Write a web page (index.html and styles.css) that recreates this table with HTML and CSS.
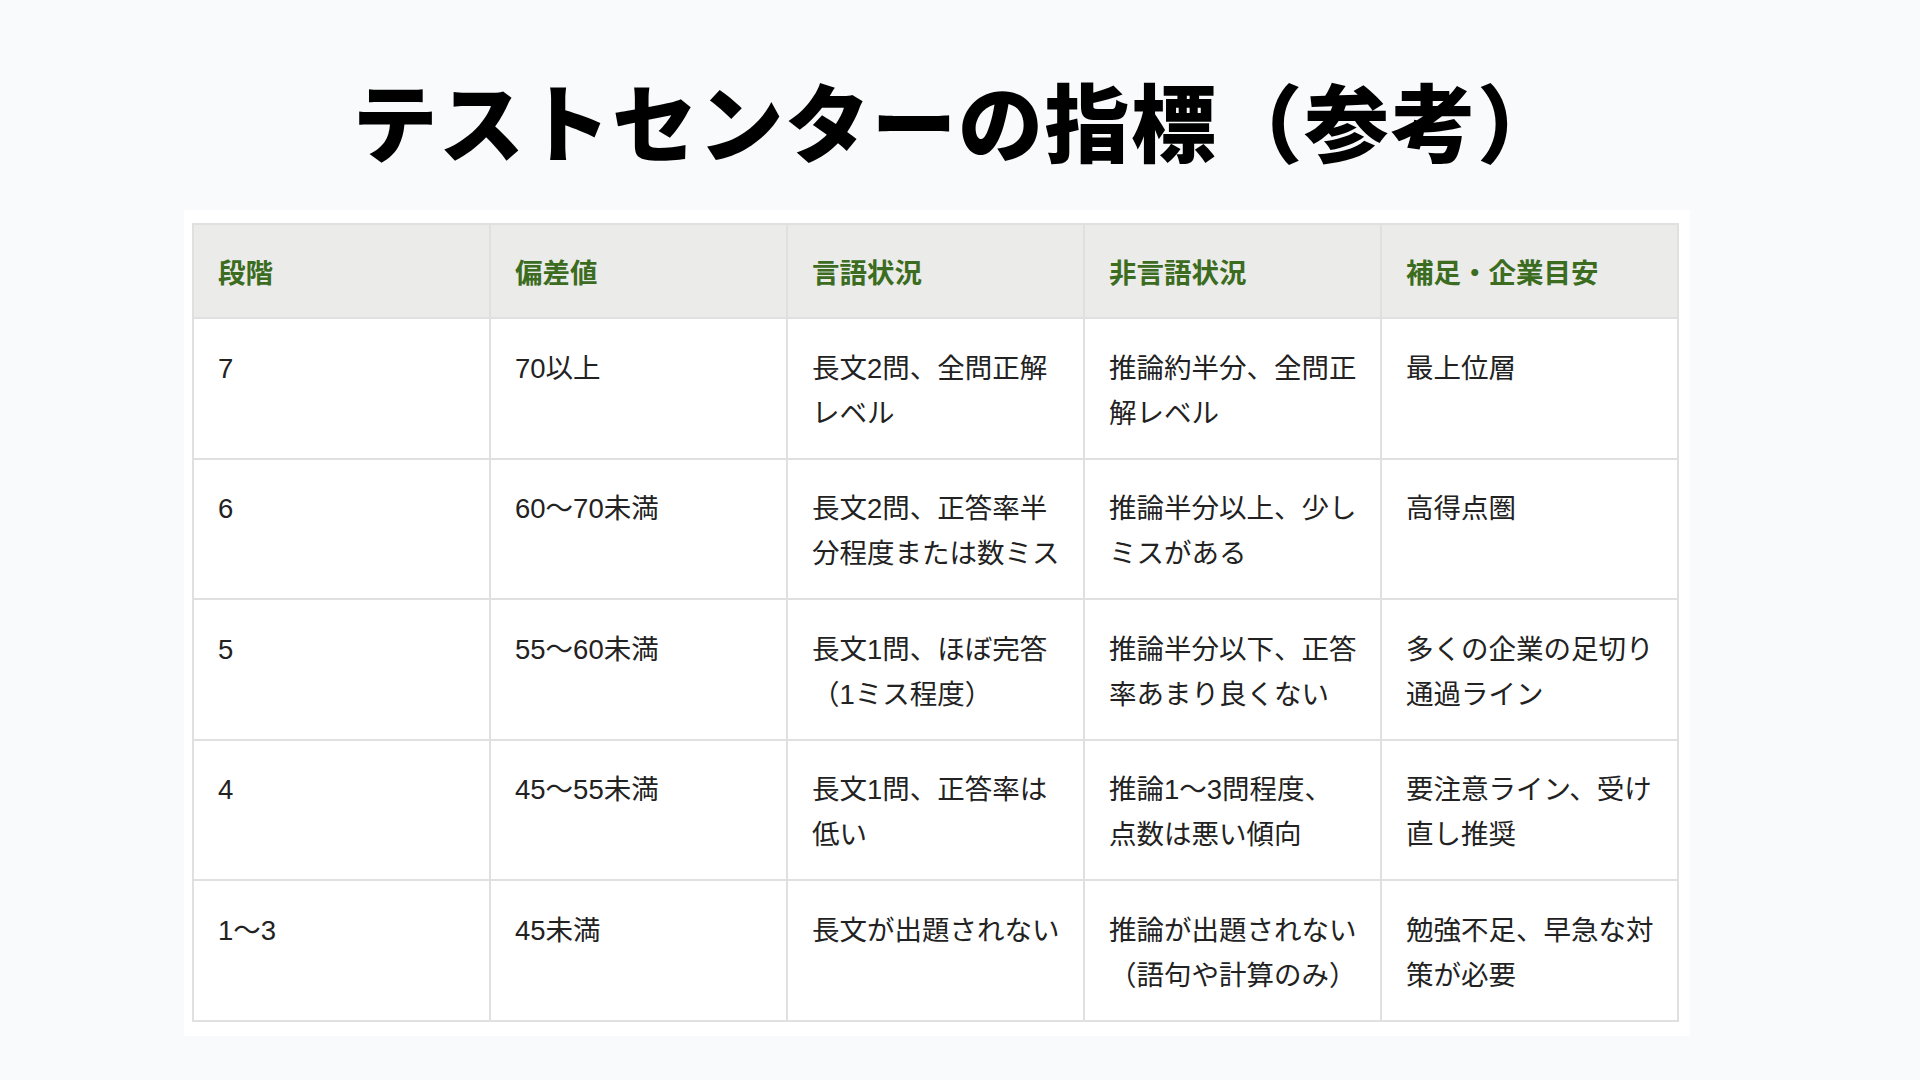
FILE: index.html
```html
<!DOCTYPE html>
<html lang="ja">
<head>
<meta charset="utf-8">
<title>テストセンターの指標（参考）</title>
<link rel="stylesheet" href="styles.css">
</head>
<body>
<main class="page">
  <h1 class="title">テストセンターの指標（参考）</h1>
  <section class="card">
    <table class="grid">
      <thead>
        <tr>
          <th>段階</th>
          <th>偏差値</th>
          <th>言語状況</th>
          <th>非言語状況</th>
          <th>補足・企業目安</th>
        </tr>
      </thead>
      <tbody>
        <tr>
          <td>7</td>
          <td>70以上</td>
          <td>長文2問、全問正解レベル</td>
          <td>推論約半分、全問正解レベル</td>
          <td>最上位層</td>
        </tr>
        <tr>
          <td>6</td>
          <td>60〜70未満</td>
          <td>長文2問、正答率半分程度または数ミス</td>
          <td>推論半分以上、少しミスがある</td>
          <td>高得点圏</td>
        </tr>
        <tr>
          <td>5</td>
          <td>55〜60未満</td>
          <td>長文1問、ほぼ完答（1ミス程度）</td>
          <td>推論半分以下、正答率あまり良くない</td>
          <td>多くの企業の足切り通過ライン</td>
        </tr>
        <tr>
          <td>4</td>
          <td>45〜55未満</td>
          <td>長文1問、正答率は低い</td>
          <td>推論1〜3問程度、点数は悪い傾向</td>
          <td>要注意ライン、受け直し推奨</td>
        </tr>
        <tr>
          <td>1〜3</td>
          <td>45未満</td>
          <td>長文が出題されない</td>
          <td>推論が出題されない（語句や計算のみ）</td>
          <td>勉強不足、早急な対策が必要</td>
        </tr>
      </tbody>
    </table>
  </section>
</main>
</body>
</html>
```

FILE: styles.css
```css
html, body {
  margin: 0;
  padding: 0;
  background: #f8fafc;
}

body {
  width: 1920px;
  height: 1080px;
  overflow: hidden;
  font-family: "Liberation Sans", "Noto Sans CJK JP", sans-serif;
  color: #222222;
}

.page {
  padding: 68px 46px 0 0;
  display: flex;
  flex-direction: column;
  align-items: center;
}

.title {
  margin: 0;
  padding-left: 42px;
  font-family: "Noto Sans CJK JP", sans-serif;
  font-weight: 900;
  font-size: 85px;
  line-height: 1.2;
  color: #000000;
  letter-spacing: 1.5px;
}

.card {
  margin-top: 40px;
  background: #ffffff;
  padding: 13px 11px 14px 8px;
}

.grid {
  width: 1487px;
  table-layout: fixed;
  border-collapse: collapse;
  font-size: 27.5px;
  line-height: 45px;
}

.grid th,
.grid td {
  border: 2px solid #e0e0e0;
  text-align: left;
  vertical-align: top;
  padding: 26.5px 22px 22px 24px;
}

.grid th {
  background: #ebebe9;
  color: #3b6c1f;
  font-family: "Noto Sans CJK JP", sans-serif;
  font-weight: 700;
  padding-top: 23.5px;
  padding-bottom: 23.5px;
}

.grid td {
  background: #ffffff;
  font-weight: 400;
}
```
